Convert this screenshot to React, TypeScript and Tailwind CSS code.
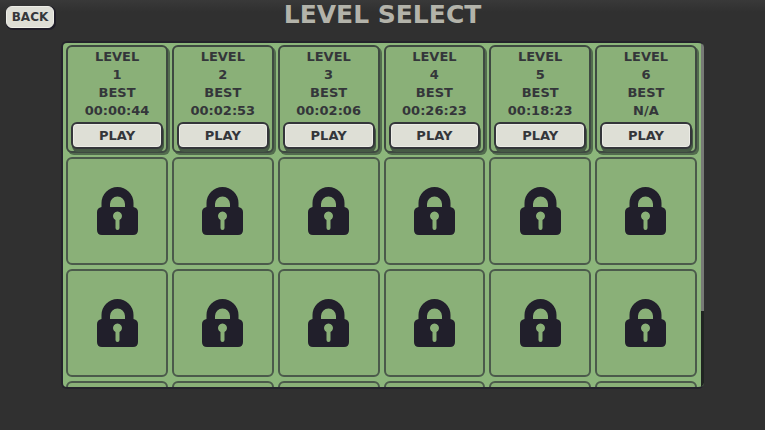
import React from "react";

type Level = {
  id: number;
  best: string;
};

const levels: Level[] = [
  { id: 1, best: "00:00:44" },
  { id: 2, best: "00:02:53" },
  { id: 3, best: "00:02:06" },
  { id: 4, best: "00:26:23" },
  { id: 5, best: "00:18:23" },
  { id: 6, best: "N/A" },
];

const lockedLevels = Array.from({ length: 18 }, (_, i) => levels.length + i + 1);

function LockIcon() {
  return (
    <svg width="41" height="48" viewBox="0 0 41 48" aria-hidden="true">
      <path
        fill="#211f2b"
        fillRule="evenodd"
        d="M4.500 20V16a16 16 0 0 1 32 0v4q4.500 1 4.500 5v18q0 5-5 5H5q-5 0-5-5V25q0-4 4.500-5zM13 20h15v-3a7.500 7.500 0 0 0-15 0zM18.500 33v8a2 2 0 0 0 4 0V33a4.500 4.500 0 1 0-4 0z"
      />
    </svg>
  );
}

function LevelCard({ level }: { level: Level }) {
  return (
    <article className="flex flex-col rounded-md border-2 border-[#3e4941] bg-[#8ab078] px-[3px] text-center text-[13px] font-bold leading-[18px] text-[#34363a] shadow-[2px_2px_0_#526b4e]">
      <h2 className="pt-px">LEVEL</h2>
      <p>{level.id}</p>
      <p>BEST</p>
      <p>{level.best}</p>
      <button
        type="button"
        aria-label={`Play level ${level.id}`}
        className="mt-[2px] h-[27px] rounded-md border-2 border-[#34363a] bg-[#dedfd6] leading-none shadow-[inset_0_0_0_1px_#ecece6,1px_3px_0_#465a45]"
      >
        PLAY
      </button>
    </article>
  );
}

function LockedCard({ id }: { id: number }) {
  return (
    <article
      aria-label={`Level ${id} locked`}
      className="flex items-center justify-center rounded-md border-2 border-[#4b5a4b] bg-[#8ab078]"
    >
      <LockIcon />
    </article>
  );
}

export default function App() {
  return (
    <div className="flex h-screen flex-col bg-[#303030] bg-linear-to-b from-[#393939] to-[#303030] to-[12px] font-['DejaVu_Sans',sans-serif]">
      <header className="grid h-[41px] shrink-0 grid-cols-[1fr_auto_1fr] items-start px-[6px]">
        <button
          type="button"
          className="mt-[6px] h-[22px] w-12 rounded-md border border-[#eeeee8] bg-[#deded6] text-xs font-bold leading-none text-[#34363a] shadow-[1px_1px_0_1px_#1f1d28]"
        >
          BACK
        </button>
        <h1 className="text-[25px] font-bold leading-[30px] text-[#b3b3aa]">
          LEVEL SELECT
        </h1>
      </header>
      <main className="mx-[8%] mb-[41px] flex min-h-0 flex-1 overflow-hidden rounded-md border-2 border-r-0 border-[#24232b] bg-[#8cb67b]">
        <section className="grid flex-1 auto-rows-[108px] grid-cols-6 gap-1 overflow-hidden pt-[2px] pr-1 pl-[3px]">
          {levels.map((level) => (
            <LevelCard key={level.id} level={level} />
          ))}
          {lockedLevels.map((id) => (
            <LockedCard key={id} id={id} />
          ))}
        </section>
        <div className="w-[3px] bg-[#202422]">
          <div className="h-[78%] bg-[#777a76]" />
        </div>
      </main>
    </div>
  );
}
